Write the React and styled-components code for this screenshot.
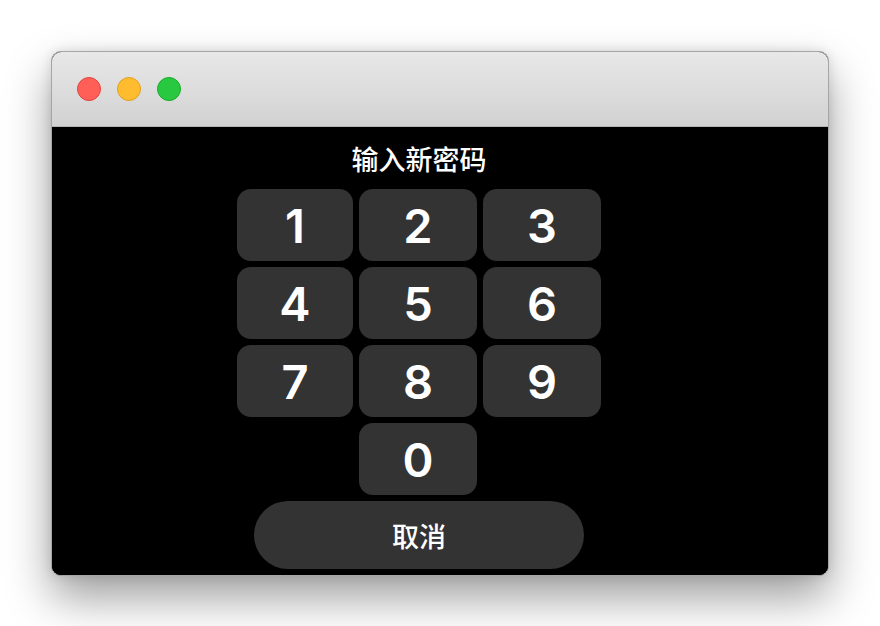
import styled, { createGlobalStyle } from 'styled-components';

const GlobalStyle = createGlobalStyle`
  html, body {
    margin: 0;
    padding: 0;
    background: #ffffff;
  }
  body {
    font-family: Inter, "Noto Sans CJK SC", sans-serif;
  }
`;

const keys = ['1', '2', '3', '4', '5', '6', '7', '8', '9'];

const App = () => {
  return (
    <>
      <GlobalStyle />
      <Page>
        <Window>
          <TitleBar>
            <Light color="#ff5f57" edge="#e0443e" />
            <Light color="#febc2e" edge="#dea123" />
            <Light color="#28c840" edge="#1aab29" />
          </TitleBar>
          <Content>
            <Heading>输入新密码</Heading>
            <Keypad>
              {keys.map((k) => (
                <Key key={k}>{k}</Key>
              ))}
              <Key col={2}>0</Key>
            </Keypad>
            <Cancel>取消</Cancel>
          </Content>
        </Window>
      </Page>
    </>
  );
};

export default App;

const Page = styled.div`
  width: 880px;
  height: 626px;
  padding: 51px 0 0 51px;
  box-sizing: border-box;
  overflow: hidden;
`;

const Window = styled.div`
  width: 778px;
  height: 525px;
  box-sizing: border-box;
  border: 1px solid #a6a6a6;
  border-radius: 10px;
  overflow: hidden;
  display: flex;
  flex-direction: column;
  background: #000;
  box-shadow: 0 22px 45px rgba(0, 0, 0, 0.38), 0 0 12px rgba(0, 0, 0, 0.12);
`;

const TitleBar = styled.div`
  height: 75px;
  flex: none;
  box-sizing: border-box;
  border-bottom: 1px solid #b4b4b4;
  background: linear-gradient(#e8e8e8, #d2d2d2);
  display: flex;
  align-items: center;
  gap: 16px;
  padding-left: 25px;
`;

const Light = styled.span`
  width: 24px;
  height: 24px;
  box-sizing: border-box;
  border-radius: 50%;
  background: ${(p) => p.color};
  border: 1px solid ${(p) => p.edge};
`;

const Content = styled.div`
  flex: 1;
  display: flex;
  flex-direction: column;
  align-items: center;
  padding: 15px 42px 0 0;
  background: #000;
`;

const Heading = styled.div`
  color: #fff;
  font-family: "Noto Sans CJK SC", sans-serif;
  font-size: 27px;
  font-weight: 500;
  line-height: 34px;
  margin-bottom: 13px;
`;

const Keypad = styled.div`
  display: grid;
  grid-template-columns: 116px 118px 118px;
  grid-auto-rows: 72px;
  gap: 6px;
`;

const Key = styled.div`
  grid-column: ${(p) => p.col || 'auto'};
  background: #333333;
  border-radius: 14px;
  display: flex;
  align-items: center;
  justify-content: center;
  color: #fff;
  font-family: Inter, sans-serif;
  font-size: 47px;
  font-weight: 600;
`;

const Cancel = styled.div`
  margin-top: 6px;
  width: 330px;
  height: 68px;
  border-radius: 34px;
  background: #333333;
  display: flex;
  align-items: center;
  justify-content: center;
  color: #fff;
  font-family: "Noto Sans CJK SC", sans-serif;
  font-size: 27px;
  font-weight: 500;
`;
